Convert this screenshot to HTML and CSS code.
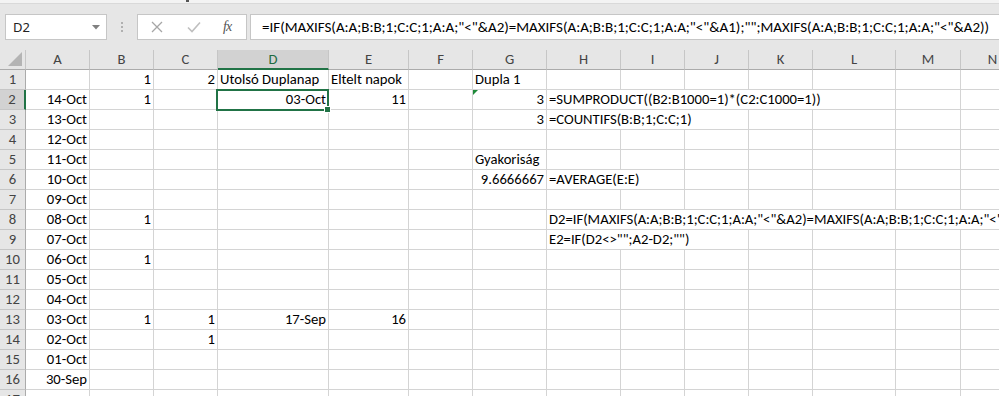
FILE: index.html
```html
<!DOCTYPE html>
<html lang="hu">
<head>
<meta charset="utf-8">
<title>Excel</title>
<link rel="stylesheet" href="styles.css">
</head>
<body>
<div class="chrome">
  <div class="strip"><span class="mark"></span></div>
  <div class="fbar">
    <div class="namebox">
      <span class="nb-text">D2</span>
      <svg class="caret" width="8" height="5" viewBox="0 0 8 5"><path d="M0 0H8L4 4.5Z" fill="#808080"/></svg>
    </div>
    <div class="sep"><i></i><i></i><i></i></div>
    <div class="fxbox">
      <svg class="ico" width="12" height="12" viewBox="0 0 12 12"><path d="M1 1L11 11M11 1L1 11" stroke="#a6a6a6" stroke-width="1.3" fill="none"/></svg>
      <svg class="ico" width="14" height="12" viewBox="0 0 14 12"><path d="M1 6.5L5 10.5L13 1.5" stroke="#bfbfbf" stroke-width="1.6" fill="none"/></svg>
      <span class="fx">fx</span>
    </div>
    <div class="formula">=IF(MAXIFS(A:A;B:B;1;C:C;1;A:A;"&lt;"&amp;A2)=MAXIFS(A:A;B:B;1;C:C;1;A:A;"&lt;"&amp;A1);"";MAXIFS(A:A;B:B;1;C:C;1;A:A;"&lt;"&amp;A2))</div>
  </div>
</div>

<div class="sheet">
  <div class="ch corner"><span class="tri"></span></div>
  <div class="ch">A</div><div class="ch">B</div><div class="ch">C</div><div class="ch ch-sel">D</div><div class="ch">E</div><div class="ch">F</div><div class="ch">G</div><div class="ch">H</div><div class="ch">I</div><div class="ch">J</div><div class="ch">K</div><div class="ch">L</div><div class="ch">M</div><div class="ch">N</div>

  <div class="rh">1</div><i></i><i class="r">1</i><i class="r">2</i><i>Utolsó Duplanap</i><i>Eltelt napok</i><i></i><i>Dupla 1</i><i></i><i></i><i></i><i></i><i></i><i></i><i></i>

  <div class="rh rh-sel">2</div><i class="r">14-Oct</i><i class="r">1</i><i></i><i class="r sel">03-Oct</i><i class="r">11</i><i></i><i class="r warn">3</i><i class="s5">=SUMPRODUCT((B2:B1000=1)*(C2:C1000=1))</i><i></i><i></i>

  <div class="rh">3</div><i class="r">13-Oct</i><i></i><i></i><i></i><i></i><i></i><i class="r">3</i><i class="s3">=COUNTIFS(B:B;1;C:C;1)</i><i></i><i></i><i></i><i></i>

  <div class="rh">4</div><i class="r">12-Oct</i><i></i><i></i><i></i><i></i><i></i><i></i><i></i><i></i><i></i><i></i><i></i><i></i><i></i>

  <div class="rh">5</div><i class="r">11-Oct</i><i></i><i></i><i></i><i></i><i></i><i>Gyakoriság</i><i></i><i></i><i></i><i></i><i></i><i></i><i></i>

  <div class="rh">6</div><i class="r">10-Oct</i><i></i><i></i><i></i><i></i><i></i><i class="r">9.6666667</i><i class="s2">=AVERAGE(E:E)</i><i></i><i></i><i></i><i></i><i></i>

  <div class="rh">7</div><i class="r">09-Oct</i><i></i><i></i><i></i><i></i><i></i><i></i><i></i><i></i><i></i><i></i><i></i><i></i><i></i>

  <div class="rh">8</div><i class="r">08-Oct</i><i class="r">1</i><i></i><i></i><i></i><i></i><i></i><i class="s7">D2=IF(MAXIFS(A:A;B:B;1;C:C;1;A:A;"&lt;"&amp;A2)=MAXIFS(A:A;B:B;1;C:C;1;A:A;"&lt;"&amp;A1);"";MAXIFS(A:A;B:B;1;C:C;1;A:A;"&lt;"&amp;A2))</i>

  <div class="rh">9</div><i class="r">07-Oct</i><i></i><i></i><i></i><i></i><i></i><i></i><i class="s3">E2=IF(D2&lt;&gt;"";A2-D2;"")</i><i></i><i></i><i></i><i></i>

  <div class="rh">10</div><i class="r">06-Oct</i><i class="r">1</i><i></i><i></i><i></i><i></i><i></i><i></i><i></i><i></i><i></i><i></i><i></i><i></i>

  <div class="rh">11</div><i class="r">05-Oct</i><i></i><i></i><i></i><i></i><i></i><i></i><i></i><i></i><i></i><i></i><i></i><i></i><i></i>

  <div class="rh">12</div><i class="r">04-Oct</i><i></i><i></i><i></i><i></i><i></i><i></i><i></i><i></i><i></i><i></i><i></i><i></i><i></i>

  <div class="rh">13</div><i class="r">03-Oct</i><i class="r">1</i><i class="r">1</i><i class="r">17-Sep</i><i class="r">16</i><i></i><i></i><i></i><i></i><i></i><i></i><i></i><i></i><i></i>

  <div class="rh">14</div><i class="r">02-Oct</i><i></i><i class="r">1</i><i></i><i></i><i></i><i></i><i></i><i></i><i></i><i></i><i></i><i></i><i></i>

  <div class="rh">15</div><i class="r">01-Oct</i><i></i><i></i><i></i><i></i><i></i><i></i><i></i><i></i><i></i><i></i><i></i><i></i><i></i>

  <div class="rh">16</div><i class="r">30-Sep</i><i></i><i></i><i></i><i></i><i></i><i></i><i></i><i></i><i></i><i></i><i></i><i></i><i></i>

  <div class="rh">17</div><i></i><i></i><i></i><i></i><i></i><i></i><i></i><i></i><i></i><i></i><i></i><i></i><i></i><i></i>
</div>
</body>
</html>
```

FILE: styles.css
```css
html, body {
  margin: 0;
  padding: 0;
}
body {
  width: 999px;
  height: 396px;
  overflow: hidden;
  background: #ffffff;
  font-family: "Carlito", "Lato", "Liberation Sans", sans-serif;
  color: #000;
}

.chrome {
  height: 50px;
  background: #e6e6e6;
  display: flex;
  flex-direction: column;
}
.strip {
  height: 3px;
  background: #f3f3f3;
  border-bottom: 1px solid #d9d9d9;
  position: relative;
}
.mark {
  position: absolute;
  left: 186px;
  top: 0;
  width: 3px;
  height: 2px;
  background: #555;
}
.fbar {
  display: flex;
  align-items: stretch;
  margin-top: 10px;
  padding-left: 5px;
  height: 26px;
}
.fbar > * { flex-shrink: 0; }
.namebox {
  box-sizing: border-box;
  width: 102px;
  background: #fff;
  border: 1px solid #c6c6c6;
  display: flex;
  align-items: center;
  justify-content: space-between;
  padding: 0 6px 0 7px;
}
.nb-text {
  font-family: "Noto Sans", "Open Sans", sans-serif;
  font-size: 13px;
  color: #222;
}
.caret { margin-top: 1px; }
.sep {
  width: 30px;
  display: flex;
  flex-direction: column;
  align-items: center;
  justify-content: center;
  gap: 2px;
}
.sep i {
  width: 2px;
  height: 2px;
  background: #b0b0b0;
}
.fxbox {
  box-sizing: border-box;
  width: 110px;
  background: #fff;
  border: 1px solid #c6c6c6;
  display: flex;
  align-items: center;
  padding-left: 13px;
}
.fxbox .ico:nth-child(1) { margin-right: 24px; }
.fxbox .ico:nth-child(2) { margin-right: 22px; }
.fx {
  font-family: "Liberation Serif", serif;
  font-style: italic;
  font-size: 14px;
  color: #555;
  letter-spacing: -1px;
}
.formula {
  margin-left: 3px;
  width: 760px;
  background: #fff;
  border: 1px solid #c6c6c6;
  border-right: none;
  box-sizing: border-box;
  padding-left: 11px;
  font-size: 15px;
  line-height: 24px;
  white-space: nowrap;
  overflow: hidden;
}

.sheet {
  display: grid;
  grid-template-columns: 26px 64px 64px 64px 111px 80px 64px 74px 74px 64px 64px 64px 83px 65px 64px;
  grid-auto-rows: 20px;
  width: 1025px;
  font-size: 14.67px;
}
.sheet > * {
  box-sizing: border-box;
  border-right: 1px solid #d4d4d4;
  border-bottom: 1px solid #d4d4d4;
  font-style: normal;
  line-height: 19px;
  padding: 0 2px;
  white-space: nowrap;
  overflow: hidden;
  position: relative;
}
.sheet .ch {
  background: #e6e6e6;
  border-right-color: #c6c6c6;
  border-bottom-color: #ababab;
  text-align: center;
  color: #444;
}
.sheet .ch-sel {
  background: #d2d2d2;
  border-bottom: 2px solid #217346;
  color: #1e6b41;
}
.tri {
  position: absolute;
  right: 3px;
  bottom: 3px;
  width: 0;
  height: 0;
  border-left: 14px solid transparent;
  border-bottom: 14px solid #b4b4b4;
}
.sheet .rh {
  background: #e6e6e6;
  border-right-color: #ababab;
  border-bottom-color: #c6c6c6;
  text-align: center;
  color: #444;
  padding: 0;
}
.sheet .rh-sel {
  background: #d2d2d2;
  border-right: 2px solid #217346;
  color: #444;
}
.r { text-align: right; }
.sel::after {
  content: "";
  position: absolute;
  left: -2px;
  top: -1px;
  right: -1px;
  bottom: -2px;
  border: 2px solid #217346;
  pointer-events: none;
}
.sel::before {
  content: "";
  position: absolute;
  right: -3px;
  bottom: -4px;
  width: 5px;
  height: 5px;
  background: #217346;
  border: 1px solid #fff;
  z-index: 2;
}
.sheet .sel { overflow: visible; z-index: 1; }
.warn::before {
  content: "";
  position: absolute;
  left: 0;
  top: 0;
  border-top: 5px solid #1f8a3a;
  border-right: 5px solid transparent;
}
.s2 { grid-column: span 2; }
.s3 { grid-column: span 3; }
.s5 { grid-column: span 5; }
.s7 { grid-column: span 7; }
```
